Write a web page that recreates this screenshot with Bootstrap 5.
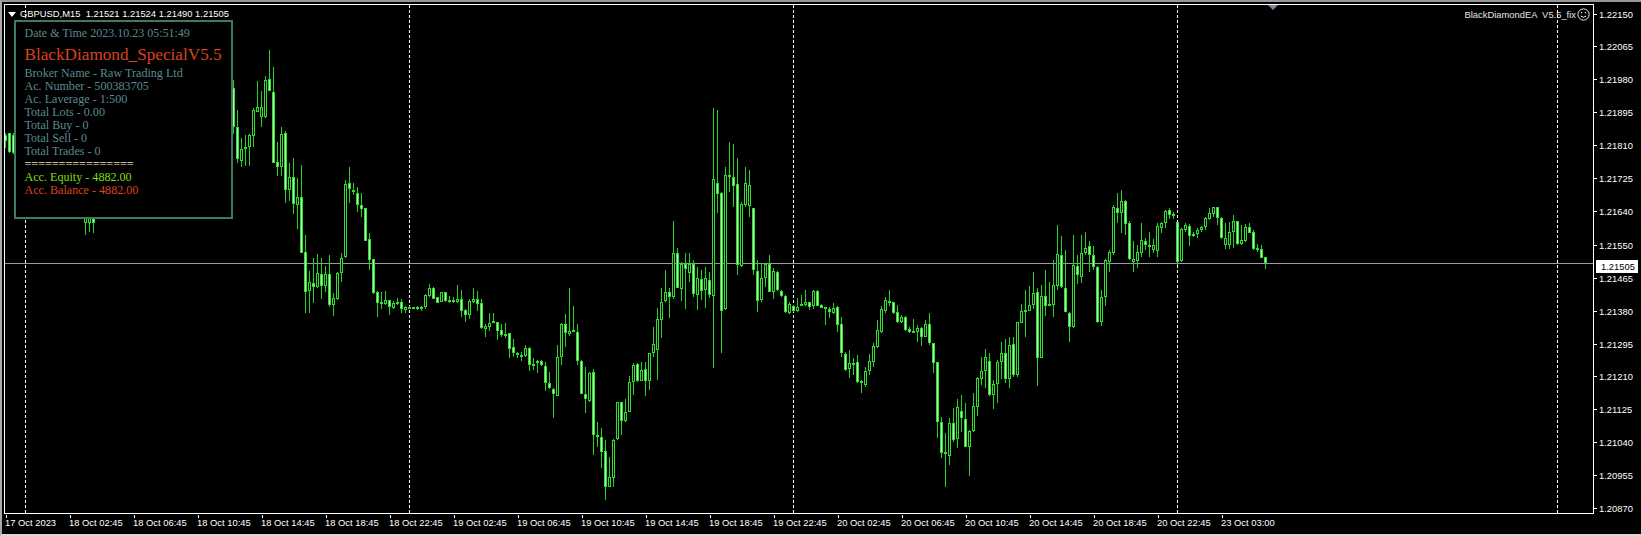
<!DOCTYPE html>
<html lang="en">
<head>
<meta charset="utf-8">
<title>GBPUSD,M15</title>
<link rel="stylesheet" href="https://cdn.jsdelivr.net/npm/bootstrap@5.3.0/dist/css/bootstrap.min.css">
<style>
html,body{background:#000;margin:0;overflow:hidden}
.term{width:1641px;height:536px;border-top:2px solid #979797;border-left:2px solid #a8a8a8;border-bottom:2px solid #d8d8d8;padding-top:2px;box-sizing:border-box;font-family:"Liberation Sans",Arial,sans-serif;font-size:9.4px;color:#fff;line-height:13px}
.plot{margin-left:2px;width:1590px;height:510px;border:1px solid #fff;flex:none}
.plot svg{inset:0;width:1588px;height:508px;display:block}
.pr-axis{width:47px;padding-top:3.5px;gap:19.86px}
.pr-row{height:13px;gap:2px}
.pr-row.bump{margin-top:1.5px}
.tk-h{width:3px;height:1px;background:#fff;flex:none}
.pr-now{left:1594px;top:256px;width:42px;height:13px;background:#fff;color:#000;padding-left:5px}
.tm-axis{padding-left:3px}
.tm-cell{width:64px;flex:none}
.tk-v{width:1px;height:3px;background:#fff;margin-left:1px}
.tm-lab{margin-top:-2px;white-space:nowrap}
.sym{left:15px;top:2px;white-space:pre}
.tri-l{left:3px;top:7px;width:0;height:0;border-left:4px solid transparent;border-right:4px solid transparent;border-top:5px solid #fff}
.tri-s{left:1263px;top:0;width:0;height:0;border-left:5px solid transparent;border-right:5px solid transparent;border-top:5px solid #778899}
.ea{right:3px;top:3px;gap:1px;white-space:pre;color:#e6e6e6}
.ea svg{position:static;width:13px;height:13px}
.info{left:9px;top:15px;width:219px;height:199px;background:#000;border:2px solid #3d7a5e;padding:4.5px 0 0 8.5px;font-family:"Liberation Serif","Times New Roman",serif;font-size:12.1px;line-height:13px;color:#5a8a90;z-index:2}
.info-date{font-size:12px}
.info-title{margin:4px 0 1.5px;font-size:17.2px;line-height:22px;color:#d9431e}
.c-eq{color:#80dc10}
.c-ba{color:#d9431e}
.c-sep{color:#f4e4b4}
.w{fill:#27d027}
.b{fill:#2fe02f}
.p{fill:#a8ffa8}
.k{fill:#000}
.g{stroke:#fff;stroke-width:1;stroke-dasharray:3 2;fill:none}
.n{fill:#9a9a9a}
</style>
</head>
<body>
<div class="term d-flex flex-column">
  <div class="d-flex position-relative">
    <div class="plot position-relative overflow-hidden bg-black">
      <svg id="cv" class="position-absolute" viewBox="5 5 1588 508" shape-rendering="crispEdges" aria-hidden="true"></svg>
      <span class="tri-l position-absolute"></span>
      <span class="tri-s position-absolute"></span>
      <div class="sym position-absolute">GBPUSD,M15  1.21521 1.21524 1.21490 1.21505</div>
      <div class="ea position-absolute d-flex align-items-center"><span>BlackDiamondEA  V5.5_fix</span>
        <svg viewBox="0 0 13 13" shape-rendering="geometricPrecision" fill="none" stroke="#e6e6e6"><circle cx="6.5" cy="6.5" r="5.6"/><path d="M3.6 8q2.9 2.6 5.8 0"/><path d="M4.6 4v1.2M8.4 4v1.2" stroke-width="1.2"/></svg>
      </div>
      <div class="info position-absolute">
        <div class="info-date">Date &amp; Time 2023.10.23 05:51:49</div>
        <div class="info-title">BlackDiamond_SpecialV5.5</div>
        <div>Broker Name - Raw Trading Ltd</div>
        <div>Ac. Number - 500383705</div>
        <div>Ac. Laverage - 1:500</div>
        <div>Total Lots - 0.00</div>
        <div>Total Buy - 0</div>
        <div>Total Sell - 0</div>
        <div>Total Trades - 0</div>
        <div class="c-sep">================</div>
        <div class="c-eq">Acc. Equity - 4882.00</div>
        <div class="c-ba">Acc. Balance - 4882.00</div>
      </div>
    </div>
    <div class="pr-axis d-flex flex-column flex-none">
      <div class="pr-row d-flex align-items-center"><span class="tk-h"></span><span>1.22150</span></div>
      <div class="pr-row d-flex align-items-center"><span class="tk-h"></span><span>1.22065</span></div>
      <div class="pr-row d-flex align-items-center"><span class="tk-h"></span><span>1.21980</span></div>
      <div class="pr-row d-flex align-items-center"><span class="tk-h"></span><span>1.21895</span></div>
      <div class="pr-row d-flex align-items-center"><span class="tk-h"></span><span>1.21810</span></div>
      <div class="pr-row d-flex align-items-center"><span class="tk-h"></span><span>1.21725</span></div>
      <div class="pr-row d-flex align-items-center"><span class="tk-h"></span><span>1.21640</span></div>
      <div class="pr-row bump d-flex align-items-center"><span class="tk-h"></span><span>1.21550</span></div>
      <div class="pr-row d-flex align-items-center"><span class="tk-h"></span><span>1.21465</span></div>
      <div class="pr-row d-flex align-items-center"><span class="tk-h"></span><span>1.21380</span></div>
      <div class="pr-row d-flex align-items-center"><span class="tk-h"></span><span>1.21295</span></div>
      <div class="pr-row d-flex align-items-center"><span class="tk-h"></span><span>1.21210</span></div>
      <div class="pr-row d-flex align-items-center"><span class="tk-h"></span><span>1.21125</span></div>
      <div class="pr-row d-flex align-items-center"><span class="tk-h"></span><span>1.21040</span></div>
      <div class="pr-row d-flex align-items-center"><span class="tk-h"></span><span>1.20955</span></div>
      <div class="pr-row d-flex align-items-center"><span class="tk-h"></span><span>1.20870</span></div>
    </div>
    <div class="pr-now position-absolute">1.21505</div>
  </div>
  <div class="tm-axis d-flex" id="tm"></div>
</div>
<script src="https://cdn.jsdelivr.net/npm/bootstrap@5.3.0/dist/js/bootstrap.bundle.min.js"></script>
<script>
/* x, high, low, body top, body bottom, pale(1)/hollow(0) */
var D=`5 133 148 135 141 1
9 133 153 133 152 1
13 133 154 135 153 1
85 200 235 200 223 0
89 200 232 200 223 0
93 200 233 200 223 1
233 80 134 88 127 1
237 110 163 127 159 1
241 138 167 149 161 0
245 135 166 147 149 0
249 134 166 135 147 0
253 108 147 110 136 0
257 81 112 107 112 0
261 91 127 107 117 0
265 76 118 80 117 0
269 50 91 79 91 1
273 67 163 92 163 1
277 142 176 162 167 1
281 127 176 134 167 0
285 131 203 133 190 1
289 163 201 177 190 0
293 158 214 177 204 1
297 178 229 197 205 0
301 165 253 197 253 1
305 235 313 252 292 1
309 271 313 282 291 0
313 258 303 283 287 1
317 254 288 273 287 0
321 258 299 274 286 1
325 266 292 274 286 0
329 255 307 274 305 1
333 293 316 298 305 0
337 272 300 273 299 0
341 253 282 258 273 0
345 180 258 184 257 0
349 167 203 183 189 1
353 183 195 190 192 1
357 187 212 193 205 1
361 193 217 205 209 1
365 208 241 208 241 1
369 233 270 239 260 1
373 259 294 259 293 1
377 291 317 292 303 1
381 292 309 302 303 1
385 291 305 300 304 0
389 300 315 300 307 1
393 301 309 303 308 0
397 298 305 302 303 1
401 299 313 302 309 1
405 306 313 307 310 0
409 306 309 307 308 1
413 307 309 307 309 1
417 306 310 307 309 0
421 306 311 307 308 1
425 294 309 295 307 0
429 284 297 288 296 0
433 287 299 288 299 1
437 297 303 297 303 1
441 292 302 292 302 0
445 292 302 292 301 1
449 296 303 300 301 1
453 297 303 300 302 1
457 285 303 299 302 0
461 290 317 299 311 1
465 309 322 310 315 1
469 299 319 301 315 0
473 288 303 299 302 0
477 291 311 299 304 1
481 299 329 303 328 1
485 324 337 326 329 0
489 313 331 323 327 0
493 313 323 321 322 1
497 322 340 322 331 1
501 324 337 330 335 1
505 323 338 334 335 1
509 333 358 333 349 1
513 339 357 347 353 1
517 352 358 353 355 0
521 352 361 355 357 1
525 345 357 348 356 0
529 347 371 348 365 1
533 358 370 364 365 1
537 360 373 361 363 0
541 360 366 361 365 1
545 362 391 366 383 1
549 372 389 383 388 1
553 388 418 389 394 1
557 345 396 357 396 0
561 323 365 324 357 0
565 314 347 324 333 1
569 288 336 331 334 0
573 306 332 330 331 1
577 324 365 332 361 1
581 360 394 361 394 1
585 367 413 394 399 1
589 372 402 373 401 0
593 369 455 372 435 1
597 422 447 435 436 1
601 428 468 437 452 1
605 440 500 451 487 1
609 457 487 477 487 0
613 439 487 440 478 0
617 402 440 402 439 0
621 402 435 402 421 1
625 399 422 412 421 0
629 376 412 382 412 0
633 363 395 365 382 0
637 363 382 364 381 1
641 362 381 370 381 0
645 362 396 369 381 1
649 353 390 353 381 0
653 327 357 344 353 0
657 308 380 319 350 0
661 288 338 302 320 0
665 270 302 292 301 0
669 288 318 292 297 1
673 221 299 253 297 0
677 248 288 253 288 1
681 262 301 264 289 0
685 253 309 264 269 1
689 253 282 264 273 0
693 260 297 264 294 1
697 267 310 278 295 0
701 270 300 279 291 1
705 267 308 278 290 0
709 272 298 280 295 1
713 108 368 179 296 0
717 110 213 183 194 1
721 192 353 193 311 1
725 167 310 175 309 0
729 142 192 175 177 1
733 144 207 177 186 1
737 158 275 184 265 1
741 202 267 204 266 0
745 167 207 183 205 0
749 170 217 185 206 0
753 208 275 208 270 1
757 260 312 271 301 1
761 263 302 278 300 0
765 263 287 264 278 0
769 255 292 264 292 1
773 268 299 271 292 0
777 271 291 272 290 1
781 290 297 291 296 1
785 295 313 296 312 1
789 302 314 304 313 0
793 305 312 306 311 1
797 298 312 307 311 0
801 295 305 304 305 1
805 290 306 302 305 0
809 302 310 302 307 1
813 290 309 291 306 0
817 290 306 291 306 1
821 304 308 305 308 1
825 307 325 307 308 1
829 307 318 309 312 1
833 303 314 308 313 0
837 306 332 307 325 1
841 317 357 324 353 1
845 352 371 354 370 1
849 350 378 363 369 0
853 358 375 363 365 0
857 355 383 362 382 1
861 380 393 381 383 1
865 367 387 371 385 0
869 354 375 361 371 0
873 343 367 346 362 0
877 320 348 330 347 0
881 306 333 309 332 0
885 297 313 300 311 0
889 290 306 301 303 1
893 302 314 302 313 1
897 305 323 312 322 1
901 315 323 317 322 0
905 316 331 317 330 1
909 327 333 329 332 1
913 319 333 331 332 1
917 325 342 328 332 0
921 327 346 328 337 1
925 320 337 324 337 0
929 313 345 324 343 1
933 343 373 343 363 1
937 362 438 362 422 1
941 417 458 422 453 1
945 433 487 452 453 1
949 418 465 423 456 0
953 408 442 423 440 1
957 399 448 407 439 0
961 395 432 411 418 1
965 403 447 419 447 1
969 430 476 431 447 0
973 393 432 406 431 0
977 377 416 378 407 0
981 357 385 371 379 0
985 349 388 357 371 0
989 353 396 361 395 1
993 380 409 384 395 0
997 360 403 362 384 0
1001 342 379 353 362 0
1005 339 383 353 379 1
1009 337 388 345 379 0
1013 337 377 344 375 1
1017 322 377 322 375 0
1021 304 323 311 323 0
1025 290 337 310 312 0
1029 286 311 305 311 0
1033 272 309 293 305 0
1037 288 386 292 358 1
1041 285 358 296 358 0
1045 270 316 296 306 1
1049 282 306 304 305 1
1053 260 317 285 305 0
1057 225 290 254 286 0
1061 236 288 255 287 1
1065 250 312 288 312 1
1069 312 342 313 327 1
1073 235 328 265 327 0
1077 255 284 266 275 1
1081 235 283 253 277 0
1085 232 255 248 253 0
1089 241 272 246 255 1
1093 246 270 255 267 1
1097 266 323 267 322 1
1101 290 326 297 322 0
1105 259 306 260 297 0
1109 250 272 252 262 0
1113 205 255 207 253 0
1117 193 223 208 213 1
1121 190 233 201 213 0
1125 200 235 201 224 1
1129 221 260 223 259 1
1133 241 272 259 262 0
1137 245 268 252 261 0
1141 223 257 240 253 0
1145 238 250 241 245 1
1149 232 257 245 246 1
1153 239 253 245 250 0
1157 223 257 226 251 0
1161 222 233 223 228 0
1165 210 228 211 223 0
1169 208 219 210 215 1
1173 212 219 214 215 1
1177 222 265 222 262 1
1181 228 262 229 261 0
1185 223 232 225 230 0
1189 224 246 226 236 1
1193 232 237 234 235 1
1197 228 238 230 234 0
1201 226 232 227 230 0
1205 217 230 218 227 0
1209 208 220 213 219 0
1213 207 217 207 214 0
1217 207 225 207 218 1
1221 217 239 218 238 1
1225 223 249 238 245 0
1229 222 249 232 245 0
1233 215 248 221 232 0
1237 221 245 221 244 1
1241 225 245 240 244 0
1245 224 242 227 241 0
1249 223 233 227 233 1
1253 230 250 232 249 1
1257 244 252 248 249 1
1261 245 258 249 258 1
1265 257 269 257 263 1`;
var NS="http://www.w3.org/2000/svg",cv=document.getElementById("cv");
function r(c,x,y,w,h){var e=document.createElementNS(NS,"rect");e.setAttribute("class",c);e.setAttribute("x",x);e.setAttribute("y",y);e.setAttribute("width",w);e.setAttribute("height",h);cv.appendChild(e);}
[25,409,793,1177,1557].forEach(function(x){var l=document.createElementNS(NS,"line");l.setAttribute("class","g");l.setAttribute("x1",x+.5);l.setAttribute("x2",x+.5);l.setAttribute("y1",5);l.setAttribute("y2",513);cv.appendChild(l);});
r("n",5,263,1588,1);
D.split("\n").forEach(function(s){var a=s.trim().split(" ").map(Number),x=a[0],t=a[3],h=Math.max(a[4]-t,2);
 r("w",x,a[1],1,a[2]-a[1]);
 r("b",x-1,t,3,h);
 if(h>2){r(a[5]?"p":"k",x,t+1,1,h-2);}
});
var T=["17 Oct 2023"];
["18","19","20"].forEach(function(d){["02","06","10","14","18","22"].forEach(function(h){T.push(d+" Oct "+h+":45");});});
T.push("23 Oct 03:00");
var tm=document.getElementById("tm");
T.forEach(function(t){var c=document.createElement("div");c.className="tm-cell";c.innerHTML='<div class="tk-v"></div><div class="tm-lab">'+t+'</div>';tm.appendChild(c);});
</script>
</body>
</html>
